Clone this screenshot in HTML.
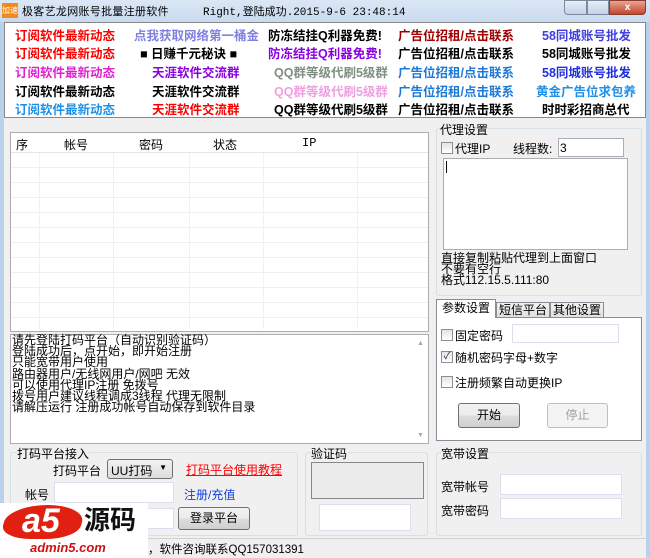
<!DOCTYPE html>
<html><head><meta charset="utf-8"><style>
*{margin:0;padding:0;box-sizing:border-box}
body{width:650px;height:558px;overflow:hidden;background:#f0f0f0;font-family:"Liberation Sans","Noto Sans CJK SC",sans-serif;font-size:12px;color:#000;position:relative}
.a{position:absolute;white-space:nowrap}
.b{font-weight:bold;font-size:12.5px}
.box{position:absolute;background:#fff;border:1px solid #abadb3}
.grp{position:absolute;border:1px solid #d5dfe5;border-radius:3px}
.cb{position:absolute;width:12px;height:12px;border:1px solid #8e8f8f;background:linear-gradient(#e4e4e4,#fff)}
.btn{position:absolute;border:1px solid #707070;border-radius:3px;background:linear-gradient(#f2f2f2,#ebebeb 50%,#dddddd 51%,#cfcfcf);text-align:center}
</style></head><body>
<div class="a" style="left:0;top:0;width:650px;height:22px;background:linear-gradient(#dbe7f5,#c9daef)"></div>
<div class="a" style="left:2px;top:3px;width:16px;height:15px;background:#f08a1c;color:#fff;font-size:8px;line-height:15px;text-align:center">加速</div>
<div class="a" style="left:22px;top:3px;font-size:11px;letter-spacing:0.3px">极客艺龙网账号批量注册软件</div>
<div class="a" style="left:203px;top:3px;font-family:'Liberation Mono','Noto Sans CJK SC',monospace;font-size:11px">Right,登陆成功.2015-9-6 23:48:14</div>
<div class="a" style="left:564px;top:0;width:23px;height:15px;border:1px solid #7c8aa0;border-radius:0 0 0 4px;background:linear-gradient(#e6eef8,#c3d2e6)"></div>
<div class="a" style="left:587px;top:0;width:22px;height:15px;border:1px solid #7c8aa0;background:linear-gradient(#e6eef8,#c3d2e6)"></div>
<div class="a" style="left:609px;top:0;width:37px;height:15px;border:1px solid #8a3a2e;border-radius:0 0 4px 0;background:linear-gradient(#e8a594,#c7452c);color:#fff;font-size:10px;text-align:center;line-height:13px;font-weight:bold">x</div>
<div class="a" style="left:0;top:22px;width:4px;height:536px;background:#b9d1ea"></div>
<div class="a" style="left:646px;top:22px;width:4px;height:536px;background:#b9d1ea"></div>
<div class="a" style="left:4px;top:22px;width:642px;height:96px;background:#fff;border:1px solid #888"></div>
<div class="a b" style="left:15px;top:25px;color:#f00">订阅软件最新动态</div>
<div class="a b" style="left:15px;top:43px;color:#f00">订阅软件最新动态</div>
<div class="a b" style="left:15px;top:62px;color:#e020d0">订阅软件最新动态</div>
<div class="a b" style="left:15px;top:81px;color:#000">订阅软件最新动态</div>
<div class="a b" style="left:15px;top:99px;color:#1e90e8">订阅软件最新动态</div>
<div class="a b" style="left:134px;top:25px;color:#8080e0">点我获取网络第一桶金</div>
<div class="a b" style="left:140px;top:43px;color:#000">■ 日赚千元秘诀 ■</div>
<div class="a b" style="left:152px;top:62px;color:#8a00e0">天涯软件交流群</div>
<div class="a b" style="left:152px;top:81px;color:#000">天涯软件交流群</div>
<div class="a b" style="left:152px;top:99px;color:#f00">天涯软件交流群</div>
<div class="a b" style="left:268px;top:25px;color:#000">防冻结挂Q利器免费!</div>
<div class="a b" style="left:268px;top:43px;color:#8a00e0">防冻结挂Q利器免费!</div>
<div class="a b" style="left:274px;top:62px;color:#809080">QQ群等级代刷5级群</div>
<div class="a b" style="left:274px;top:81px;color:#f0a0e0">QQ群等级代刷5级群</div>
<div class="a b" style="left:274px;top:99px;color:#000">QQ群等级代刷5级群</div>
<div class="a b" style="left:398px;top:25px;color:#a00000">广告位招租/点击联系</div>
<div class="a b" style="left:398px;top:43px;color:#000">广告位招租/点击联系</div>
<div class="a b" style="left:398px;top:62px;color:#1e78d8">广告位招租/点击联系</div>
<div class="a b" style="left:398px;top:81px;color:#1e78d8">广告位招租/点击联系</div>
<div class="a b" style="left:398px;top:99px;color:#000">广告位招租/点击联系</div>
<div class="a b" style="left:542px;top:25px;color:#4040e0">58同城账号批发</div>
<div class="a b" style="left:542px;top:43px;color:#000">58同城账号批发</div>
<div class="a b" style="left:542px;top:62px;color:#2030e0">58同城账号批发</div>
<div class="a b" style="left:536px;top:81px;color:#1e90e8">黄金广告位求包养</div>
<div class="a b" style="left:542px;top:99px;color:#000">时时彩招商总代</div>
<!-- list -->
<div class="box" style="left:10px;top:132px;width:419px;height:200px;background:#fff;
background-image:repeating-linear-gradient(to bottom,transparent 0 14px,#eef0f2 14px 15px);background-position:0 20px"></div>
<div class="a" style="left:11px;top:133px;width:417px;height:20px;background:#fff;border-bottom:1px solid #e5e5e5"></div>
<div class="a" style="left:39px;top:153px;width:1px;height:176px;background:#eef0f2"></div>
<div class="a" style="left:113px;top:153px;width:1px;height:176px;background:#eef0f2"></div>
<div class="a" style="left:189px;top:153px;width:1px;height:176px;background:#eef0f2"></div>
<div class="a" style="left:263px;top:153px;width:1px;height:176px;background:#eef0f2"></div>
<div class="a" style="left:357px;top:153px;width:1px;height:176px;background:#eef0f2"></div>
<div class="a" style="left:16px;top:136px">序</div>
<div class="a" style="left:64px;top:136px">帐号</div>
<div class="a" style="left:139px;top:136px">密码</div>
<div class="a" style="left:213px;top:136px">状态</div>
<div class="a" style="left:302px;top:136px;font-family:'Liberation Mono',monospace">IP</div>
<!-- log -->
<div class="box" style="left:10px;top:334px;width:419px;height:110px"></div>
<div class="a" style="left:12px;top:335px;line-height:11.2px;font-size:12px">请先登陆打码平台（自动识别验证码）<br>登陆成功后，点开始，即开始注册<br>只能宽带用户使用<br>路由器用户/无线网用户/网吧 无效<br>可以使用代理IP注册 免拨号<br>拨号用户建议线程调成3线程 代理无限制<br>请解压运行 注册成功帐号自动保存到软件目录</div>
<div class="a" style="left:417px;top:340px;color:#aaa;font-size:7px">▲</div>
<div class="a" style="left:417px;top:432px;color:#aaa;font-size:7px">▼</div>
<!-- proxy -->
<div class="grp" style="left:436px;top:128px;width:206px;height:168px"></div>
<div class="a" style="left:440px;top:121px;background:#f0f0f0">代理设置</div>
<div class="cb" style="left:441px;top:142px"></div>
<div class="a" style="left:455px;top:140px">代理IP</div>
<div class="a" style="left:513px;top:140px">线程数:</div>
<div class="box" style="left:558px;top:138px;width:66px;height:19px;padding:2px 1px">3</div>
<div class="box" style="left:443px;top:158px;width:185px;height:92px"></div>
<div class="a" style="left:446px;top:161px;width:1px;height:12px;background:#000"></div>
<div class="a" style="left:441px;top:253px;line-height:11px">直接复制粘贴代理到上面窗口<br>不要有空行<br>格式112.15.5.111:80</div>
<!-- tabs -->
<div class="box" style="left:436px;top:317px;width:206px;height:124px;border-color:#898c95"></div>
<div class="a" style="left:436px;top:299px;width:60px;height:19px;background:#fff;border:1px solid #898c95;border-bottom:none;text-align:center;line-height:17px">参数设置</div>
<div class="a" style="left:496px;top:302px;width:54px;height:16px;border:1px solid #898c95;text-align:center;line-height:14px;background:linear-gradient(#f2f2f2,#e0e0e0)">短信平台</div>
<div class="a" style="left:550px;top:302px;width:54px;height:16px;border:1px solid #898c95;text-align:center;line-height:14px;background:linear-gradient(#f2f2f2,#e0e0e0)">其他设置</div>
<div class="cb" style="left:441px;top:329px"></div>
<div class="a" style="left:455px;top:327px">固定密码</div>
<div class="box" style="left:512px;top:324px;width:107px;height:19px;border-color:#dde"></div>
<div class="cb" style="left:441px;top:351px;text-align:center;font-size:10px;line-height:10px;color:#224">✓</div>
<div class="a" style="left:455px;top:349px">随机密码字母+数字</div>
<div class="cb" style="left:441px;top:376px"></div>
<div class="a" style="left:455px;top:374px">注册频繁自动更换IP</div>
<div class="btn" style="left:458px;top:403px;width:62px;height:25px;line-height:23px">开始</div>
<div class="btn" style="left:547px;top:403px;width:61px;height:25px;line-height:23px;color:#a0a0a0;border-color:#bfbfbf;background:#f4f4f4">停止</div>
<!-- bottom groups -->
<div class="grp" style="left:10px;top:452px;width:288px;height:84px"></div>
<div class="a" style="left:17px;top:445px;background:#f0f0f0">打码平台接入</div>
<div class="a" style="left:53px;top:462px">打码平台</div>
<div class="a" style="left:107px;top:459px;width:66px;height:20px;border:1px solid #707070;border-radius:3px;background:linear-gradient(#f2f2f2,#dcdcdc);padding:2px 3px">UU打码<span style="position:absolute;right:5px;top:3px;font-size:8px">▼</span></div>
<div class="a" style="left:186px;top:461px;color:#f00;text-decoration:underline">打码平台使用教程</div>
<div class="a" style="left:25px;top:486px">帐号</div>
<div class="box" style="left:54px;top:482px;width:120px;height:21px;border-color:#dde"></div>
<div class="a" style="left:184px;top:486px;color:#1040e0">注册/充值</div>
<div class="box" style="left:54px;top:508px;width:120px;height:21px;border-color:#dde"></div>
<div class="btn" style="left:178px;top:507px;width:72px;height:23px;line-height:21px">登录平台</div>
<div class="grp" style="left:305px;top:452px;width:123px;height:84px"></div>
<div class="a" style="left:311px;top:445px;background:#f0f0f0">验证码</div>
<div class="a" style="left:311px;top:462px;width:113px;height:37px;border:1px solid #888;background:#ebebeb"></div>
<div class="box" style="left:319px;top:504px;width:92px;height:27px;border-color:#dde"></div>
<div class="grp" style="left:436px;top:452px;width:206px;height:84px"></div>
<div class="a" style="left:441px;top:445px;background:#f0f0f0">宽带设置</div>
<div class="a" style="left:441px;top:478px">宽带帐号</div>
<div class="box" style="left:500px;top:474px;width:122px;height:21px;border-color:#dde"></div>
<div class="a" style="left:441px;top:502px">宽带密码</div>
<div class="box" style="left:500px;top:498px;width:122px;height:21px;border-color:#dde"></div>
<!-- status -->
<div class="a" style="left:4px;top:538px;width:642px;height:20px;border-top:1px solid #d0d0d0;background:#f0f0f0"></div>
<div class="a" style="left:148px;top:541px;font-size:11.5px">，软件咨询联系QQ157031391</div>
<!-- logo -->
<div class="a" style="left:0;top:503px;width:148px;height:55px;background:#fff"></div>
<div class="a" style="left:4px;top:505px;width:78px;height:34px;background:#e02010;border-radius:50% 50% 40% 40%;transform:skewX(-15deg)"></div>
<div class="a" style="left:22px;top:503px;font-size:34px;font-weight:bold;color:#fff;font-style:italic;line-height:36px">a<span style="color:#fff">5</span></div>
<div class="a" style="left:84px;top:505px;font-size:26px;font-weight:bold;color:#111;line-height:30px">源码</div>
<div class="a" style="left:30px;top:540px;font-size:13px;font-weight:bold;font-style:italic;color:#d01010">admin5.com</div>
</body></html>
